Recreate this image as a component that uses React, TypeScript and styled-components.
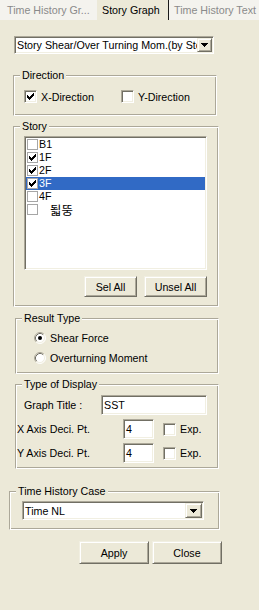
import React from "react";
import styled, { createGlobalStyle } from "styled-components";

const GlobalStyle = createGlobalStyle`
  html, body { margin: 0; padding: 0; background: #ECE9D8; }
  body {
    font-family: "Liberation Sans", Arial, sans-serif;
    font-size: 10.7px;
    color: #000;
  }
  * { box-sizing: border-box; }
`;

const Page = styled.div`
  width: 259px;
  height: 610px;
  background: #ECE9D8;
  display: flex;
  flex-direction: column;
  align-items: flex-start;
  overflow: hidden;
`;

const TabBar = styled.div`
  display: flex;
  width: 100%;
  height: 20px;
  flex-shrink: 0;
`;

const Tab = styled.div<{ $active?: boolean; $w: number; $pl: number }>`
  width: ${(p) => p.$w}px;
  height: 20px;
  line-height: 20px;
  padding-left: ${(p) => p.$pl}px;
  white-space: nowrap;
  overflow: hidden;
  background: ${(p) => (p.$active ? "#ECE9D8" : "#F4F3EE")};
  color: ${(p) => (p.$active ? "#000" : "#8A8A8A")};
  border-right: ${(p) => (p.$active ? "1px solid #1a1a1a" : "none")};
`;

const sunken = `
  background: #fff;
  border: 1px solid;
  border-color: #ACA899 #fff #fff #ACA899;
  box-shadow: inset 1px 1px #716F64, inset -1px -1px #F1EFE2;
`;

const raised = `
  background: #ECE9D8;
  border: 1px solid;
  border-color: #F1EFE2 #716F64 #716F64 #F1EFE2;
  box-shadow: inset 1px 1px #fff, inset -1px -1px #ACA899;
`;

const Combo = styled.div<{ $w: number; $h: number; $ml: number; $mt: number }>`
  ${sunken}
  width: ${(p) => p.$w}px;
  height: ${(p) => p.$h}px;
  margin: ${(p) => p.$mt}px 0 0 ${(p) => p.$ml}px;
  padding: 1px;
  display: flex;
  align-items: stretch;
  flex-shrink: 0;
`;

const ComboText = styled.div`
  flex: 1;
  min-width: 0;
  overflow: hidden;
  white-space: nowrap;
  padding-left: 1px;
  display: flex;
  align-items: center;
`;

const DropButton = styled.div<{ $w: number }>`
  ${raised}
  width: ${(p) => p.$w}px;
  flex-shrink: 0;
  display: flex;
  align-items: center;
  justify-content: center;
`;

const Group = styled.div<{ $w: number; $ml: number; $mt: number; $pb: number }>`
  width: ${(p) => p.$w}px;
  margin: ${(p) => p.$mt}px 0 0 ${(p) => p.$ml}px;
  border: 1px solid;
  border-color: #ACA899 #fff #fff #ACA899;
  box-shadow: inset 1px 1px #fff, inset -1px -1px #ACA899;
  padding-bottom: ${(p) => p.$pb}px;
  display: flex;
  flex-direction: column;
  flex-shrink: 0;
`;

const Legend = styled.div`
  align-self: flex-start;
  margin: -7px 0 0 6px;
  padding: 0 2px;
  height: 13px;
  line-height: 13px;
  background: #ECE9D8;
  white-space: nowrap;
`;

const Body = styled.div<{ $pt: number; $pl: number; $gap?: number }>`
  padding: ${(p) => p.$pt}px 0 0 ${(p) => p.$pl}px;
  display: flex;
  flex-direction: column;
  align-items: flex-start;
  gap: ${(p) => p.$gap ?? 0}px;
`;

const Row = styled.div<{ $h: number }>`
  display: flex;
  align-items: center;
  height: ${(p) => p.$h}px;
`;

const CheckItem = styled.div<{ $w?: number }>`
  display: flex;
  align-items: center;
  gap: 4px;
  width: ${(p) => (p.$w ? `${p.$w}px` : "auto")};
  white-space: nowrap;
`;

const CheckBox = styled.div`
  ${sunken}
  width: 13px;
  height: 13px;
  flex-shrink: 0;
  display: flex;
  align-items: center;
  justify-content: center;
`;

const ListBox = styled.div`
  ${sunken}
  width: 183px;
  height: 134px;
  padding: 1px;
  display: flex;
  flex-direction: column;
`;

const ListRow = styled.div<{ $selected?: boolean }>`
  height: 13px;
  display: flex;
  align-items: center;
  background: ${(p) => (p.$selected ? "#316AC5" : "transparent")};
  color: ${(p) => (p.$selected ? "#fff" : "#000")};
  white-space: pre;
`;

const ListCheck = styled.div`
  width: 11px;
  height: 11px;
  margin-left: 1px;
  border: 1px solid #A6A6A6;
  background: #fff;
  flex-shrink: 0;
  display: flex;
  align-items: center;
  justify-content: center;
`;

const ListText = styled.span<{ $indent?: number; $cjk?: boolean }>`
  margin-left: ${(p) => 1 + (p.$indent ?? 0)}px;
  font-family: ${(p) =>
    p.$cjk ? `"Noto Sans CJK KR", "Liberation Sans", sans-serif` : "inherit"};
  font-size: ${(p) => (p.$cjk ? "12.5px" : "inherit")};
  line-height: 13px;
`;

const ButtonRow = styled.div<{ $gap: number; $mt: number; $ml?: number; $w?: number }>`
  display: flex;
  justify-content: flex-end;
  gap: ${(p) => p.$gap}px;
  margin: ${(p) => p.$mt}px 0 0 ${(p) => p.$ml ?? 0}px;
  width: ${(p) => (p.$w ? `${p.$w}px` : "auto")};
  flex-shrink: 0;
`;

const PushButton = styled.div<{ $w: number; $h: number }>`
  ${raised}
  width: ${(p) => p.$w}px;
  height: ${(p) => p.$h}px;
  display: flex;
  align-items: center;
  justify-content: center;
  white-space: nowrap;
`;

const RadioItem = styled.div`
  display: flex;
  align-items: center;
  gap: 4px;
  height: 13px;
  white-space: nowrap;
`;

const FieldLabel = styled.div<{ $w: number; $pl?: number }>`
  width: ${(p) => p.$w}px;
  padding-left: ${(p) => p.$pl ?? 0}px;
  white-space: nowrap;
`;

const TextBox = styled.div<{ $w: number; $h: number }>`
  ${sunken}
  width: ${(p) => p.$w}px;
  height: ${(p) => p.$h}px;
  padding-left: 2px;
  display: flex;
  align-items: center;
  flex-shrink: 0;
`;

const ExpItem = styled(CheckItem)`
  margin-left: 9px;
`;

const CheckMark = () => (
  <svg width="7" height="7" viewBox="0 0 7 7" shapeRendering="crispEdges">
    <path
      d="M6 0h1v1h-1z M5 1h2v1h-2z M0 2h1v1h-1z M4 2h3v1h-3z M0 3h2v1h-2z M3 3h3v1h-3z M0 4h5v1h-5z M1 5h3v1h-3z M2 6h1v1h-1z"
      fill="#000"
    />
  </svg>
);

const Arrow = () => (
  <svg width="7" height="4" viewBox="0 0 7 4" shapeRendering="crispEdges">
    <path d="M0 0h7v1h-7z M1 1h5v1h-5z M2 2h3v1h-3z M3 3h1v1h-1z" fill="#000" />
  </svg>
);

const Radio = ({ checked }: { checked?: boolean }) => (
  <svg width="12" height="12" viewBox="0 0 12 12">
    <circle cx="6" cy="6" r="5" fill="#fff" />
    <path d="M2.11 9.89A5.5 5.5 0 0 1 9.89 2.11" stroke="#ACA899" fill="none" />
    <path d="M9.89 2.11A5.5 5.5 0 0 1 2.11 9.89" stroke="#fff" fill="none" />
    <path d="M2.82 9.18A4.5 4.5 0 0 1 9.18 2.82" stroke="#716F64" fill="none" />
    <path d="M9.18 2.82A4.5 4.5 0 0 1 2.82 9.18" stroke="#F1EFE2" fill="none" />
    {checked && <circle cx="6" cy="6" r="2" fill="#000" />}
  </svg>
);

const stories = [
  { name: "B1", checked: false },
  { name: "1F", checked: true },
  { name: "2F", checked: true },
  { name: "3F", checked: true, selected: true },
  { name: "4F", checked: false },
  { name: "됣뚱", checked: false, indent: 11, cjk: true },
];

export default function App() {
  return (
    <>
      <GlobalStyle />
      <Page>
        <TabBar>
          <Tab $w={97} $pl={7}>Time History Gr...</Tab>
          <Tab $w={72} $pl={5} $active>
            Story Graph
          </Tab>
          <Tab $w={90} $pl={5}>Time History Text</Tab>
        </TabBar>

        <Combo $w={200} $h={18} $ml={14} $mt={16}>
          <ComboText>Story Shear/Over Turning Mom.(by Story)</ComboText>
          <DropButton $w={15}>
            <Arrow />
          </DropButton>
        </Combo>

        <Group $w={204} $ml={13} $mt={21} $pb={12}>
          <Legend>Direction</Legend>
          <Body $pt={8} $pl={10}>
            <Row $h={13}>
              <CheckItem $w={97}>
                <CheckBox>
                  <CheckMark />
                </CheckBox>
                X-Direction
              </CheckItem>
              <CheckItem>
                <CheckBox />
                Y-Direction
              </CheckItem>
            </Row>
          </Body>
        </Group>

        <Group $w={206} $ml={13} $mt={10} $pb={9}>
          <Legend>Story</Legend>
          <Body $pt={3} $pl={10}>
            <ListBox>
              {stories.map((s) => (
                <ListRow key={s.name} $selected={s.selected}>
                  <ListCheck>{s.checked && <CheckMark />}</ListCheck>
                  <ListText $indent={s.indent} $cjk={s.cjk}>
                    {s.name}
                  </ListText>
                </ListRow>
              ))}
            </ListBox>
            <ButtonRow $gap={7} $mt={6} $w={183}>
              <PushButton $w={53} $h={21}>Sel All</PushButton>
              <PushButton $w={63} $h={21}>Unsel All</PushButton>
            </ButtonRow>
          </Body>
        </Group>

        <Group $w={204} $ml={15} $mt={11} $pb={9}>
          <Legend>Result Type</Legend>
          <Body $pt={6} $pl={18} $gap={7}>
            <RadioItem>
              <Radio checked />
              Shear Force
            </RadioItem>
            <RadioItem>
              <Radio />
              Overturning Moment
            </RadioItem>
          </Body>
        </Group>

        <Group $w={204} $ml={15} $mt={10} $pb={5}>
          <Legend>Type of Display</Legend>
          <Body $pt={4} $pl={1} $gap={4}>
            <Row $h={20}>
              <FieldLabel $w={84} $pl={7}>
                Graph Title :
              </FieldLabel>
              <TextBox $w={106} $h={20}>SST</TextBox>
            </Row>
            <Row $h={20}>
              <FieldLabel $w={106}>X Axis Deci. Pt.</FieldLabel>
              <TextBox $w={31} $h={20}>4</TextBox>
              <ExpItem>
                <CheckBox />
                Exp.
              </ExpItem>
            </Row>
            <Row $h={20}>
              <FieldLabel $w={106}>Y Axis Deci. Pt.</FieldLabel>
              <TextBox $w={31} $h={20}>4</TextBox>
              <ExpItem>
                <CheckBox />
                Exp.
              </ExpItem>
            </Row>
          </Body>
        </Group>

        <Group $w={211} $ml={9} $mt={22} $pb={9}>
          <Legend>Time History Case</Legend>
          <Body $pt={3} $pl={12}>
            <Combo $w={182} $h={19} $ml={0} $mt={0}>
              <ComboText>Time NL</ComboText>
              <DropButton $w={17}>
                <Arrow />
              </DropButton>
            </Combo>
          </Body>
        </Group>

        <ButtonRow $gap={3} $mt={11} $ml={79}>
          <PushButton $w={70} $h={23}>Apply</PushButton>
          <PushButton $w={70} $h={23}>Close</PushButton>
        </ButtonRow>
      </Page>
    </>
  );
}
